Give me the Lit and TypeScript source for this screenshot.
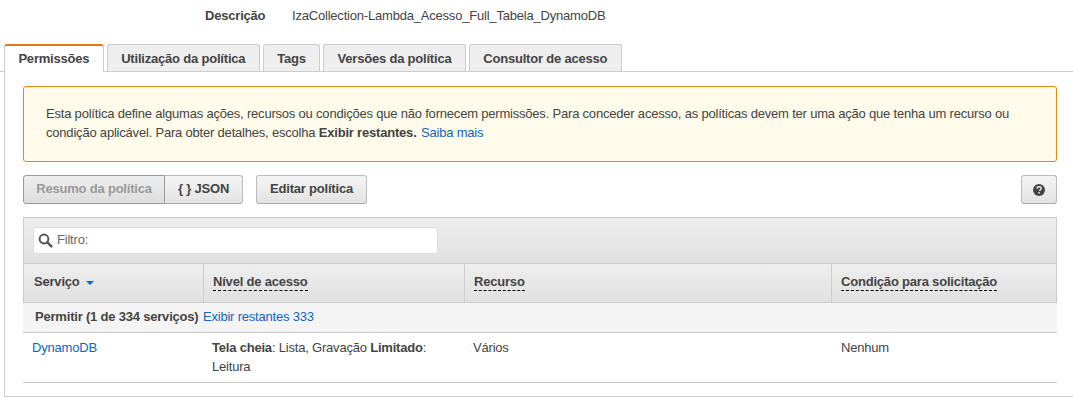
import { LitElement, html, css } from "lit";
import { customElement } from "lit/decorators.js";

@customElement("app-root")
export class AppRoot extends LitElement {
  static styles = css`
    :host { display: block; width: 1073px; height: 405px; overflow: hidden; background: #fff; color: #444; font-family: "Liberation Sans", Arial, sans-serif; font-size: 13px; letter-spacing: -0.2px; line-height: 20px; }
    * { box-sizing: border-box; }
    .desc { display: flex; height: 44px; padding: 6px 0 0 205px; }
    .desc b { width: 87px; color: #444; }
    .tabs { display: flex; gap: 3px; height: 28px; padding-left: 4px; border-bottom: 1px solid #ccc; }
    .tab { height: 27px; padding: 0 13.4px; border: 1px solid #ccc; border-bottom: none; border-radius: 3px 3px 0 0; background: #eee; font-weight: bold; line-height: 27px; color: #444; }
    .tab.on { height: 28px; background: #fff; border-top: 2px solid #e47911; position: relative; z-index: 1; line-height: 26px; }
    .panel { height: 325px; margin-left: 4px; border-left: 1px solid #ccc; border-bottom: 1px solid #ccc; padding: 14px 16px 0 18px; }
    .alert { height: 76px; padding: 17px 22px 0 22px; background: #fffbea; border: 1px solid #e08a14; border-radius: 3px; line-height: 19px; }
    a { color: #1166bb; text-decoration: none; }
    .alert a, .group a { margin-left: 1px; }
    .bar { display: flex; margin-top: 13px; height: 29px; }
    .btn { height: 29px; padding: 0 13px; border: 1px solid #bbb; border-bottom-color: #aaa; border-radius: 3px; background: linear-gradient(#f4f4f4, #e3e3e3); font-weight: bold; line-height: 26px; color: #444; }
    .btn.active { width: 142px; padding: 0; text-align: center; color: #999; background: linear-gradient(#eee, #ddd); border-color: #999; border-radius: 3px 0 0 3px; }
    .btn.json { width: 78px; padding: 0; text-align: center; border-left: none; border-radius: 0 3px 3px 0; }
    .btn.edit { margin-left: 13px; width: 111px; padding: 0; text-align: center; }
    .btn.help { margin-left: auto; width: 36px; padding: 0; display: flex; align-items: center; justify-content: center; }
    .table { margin-top: 13px; }
    .filter { height: 46px; padding: 9px 9px; background: linear-gradient(#eee, #e0e0e0); border: 1px solid #ccc; border-bottom: none; }
    .input { display: flex; align-items: center; gap: 4px; width: 405px; height: 27px; padding: 0 0 1px 4px; background: #fff; border: 1px solid #ddd; border-radius: 3px; color: #666; }
    .cols { display: grid; grid-template-columns: 179px 261px 367px 1fr; height: 40px; background: linear-gradient(#eee, #e0e0e0); border: 1px solid #ccc; }
    .cols div { padding: 9px 10px 0 9px; border-left: 1px solid #ccc; font-weight: bold; line-height: 17px; }
    .cols div:first-child { border-left: none; padding-left: 10px; display: flex; gap: 6px; align-items: flex-start; }
    .cols span.tip { display: inline-block; line-height: 17px; border-bottom: 1px dashed #000; }
    .caret { width: 0; height: 0; margin-top: 8px; border: 4.5px solid transparent; border-top: 4.5px solid #1166bb; border-bottom: none; }
    .group { height: 30px; padding: 4px 12px 0; background: #f4f4f4; border-bottom: 1px solid #ccc; }
    .row { display: grid; grid-template-columns: 180px 261px 368px 1fr; height: 50px; padding-top: 5px; border-bottom: 1px solid #ccc; line-height: 19px; }
    .row > div { padding-left: 9px; }
    .row > div.access { padding-right: 30px; }
  `;

  render() {
    return html`
      <div class="desc"><b>Descrição</b><span>IzaCollection-Lambda_Acesso_Full_Tabela_DynamoDB</span></div>
      <div class="tabs">
        <div class="tab on">Permissões</div>
        <div class="tab">Utilização da política</div>
        <div class="tab">Tags</div>
        <div class="tab">Versões da política</div>
        <div class="tab">Consultor de acesso</div>
      </div>
      <div class="panel">
        <div class="alert">Esta política define algumas ações, recursos ou condições que não fornecem permissões. Para conceder acesso, as políticas devem ter uma ação que tenha um recurso ou condição aplicável. Para obter detalhes, escolha <b>Exibir restantes.</b> <a>Saiba mais</a></div>
        <div class="bar">
          <div class="btn active">Resumo da política</div>
          <div class="btn json">{ } JSON</div>
          <div class="btn edit">Editar política</div>
          <div class="btn help">
            <svg width="12" height="12" viewBox="0 0 12 12"><circle cx="6" cy="6" r="6" fill="#444"/><path d="M3.9 4.6C4 3.4 4.9 2.8 6 2.8c1.2 0 2.1.7 2.1 1.7 0 1.5-1.6 1.4-1.6 2.6" fill="none" stroke="#eee" stroke-width="1.4"/><rect x="5.3" y="8" width="1.5" height="1.5" fill="#eee"/></svg>
          </div>
        </div>
        <div class="table">
          <div class="filter">
            <div class="input">
              <svg width="15" height="15" viewBox="0 0 15 15"><circle cx="6" cy="6" r="4.4" fill="none" stroke="#555" stroke-width="2"/><path d="M9.4 9.4l4 4" stroke="#555" stroke-width="2.4" stroke-linecap="round"/></svg>
              <span>Filtro:</span>
            </div>
          </div>
          <div class="cols">
            <div>Serviço <i class="caret"></i></div>
            <div><span class="tip">Nível de acesso</span></div>
            <div><span class="tip">Recurso</span></div>
            <div><span class="tip">Condição para solicitação</span></div>
          </div>
          <div class="group"><b>Permitir (1 de 334 serviços)</b> <a>Exibir restantes 333</a></div>
          <div class="row">
            <div><a>DynamoDB</a></div>
            <div class="access"><b>Tela cheia</b>: Lista, Gravação <b>Limitado</b>: Leitura</div>
            <div>Vários</div>
            <div>Nenhum</div>
          </div>
        </div>
      </div>
    `;
  }
}
